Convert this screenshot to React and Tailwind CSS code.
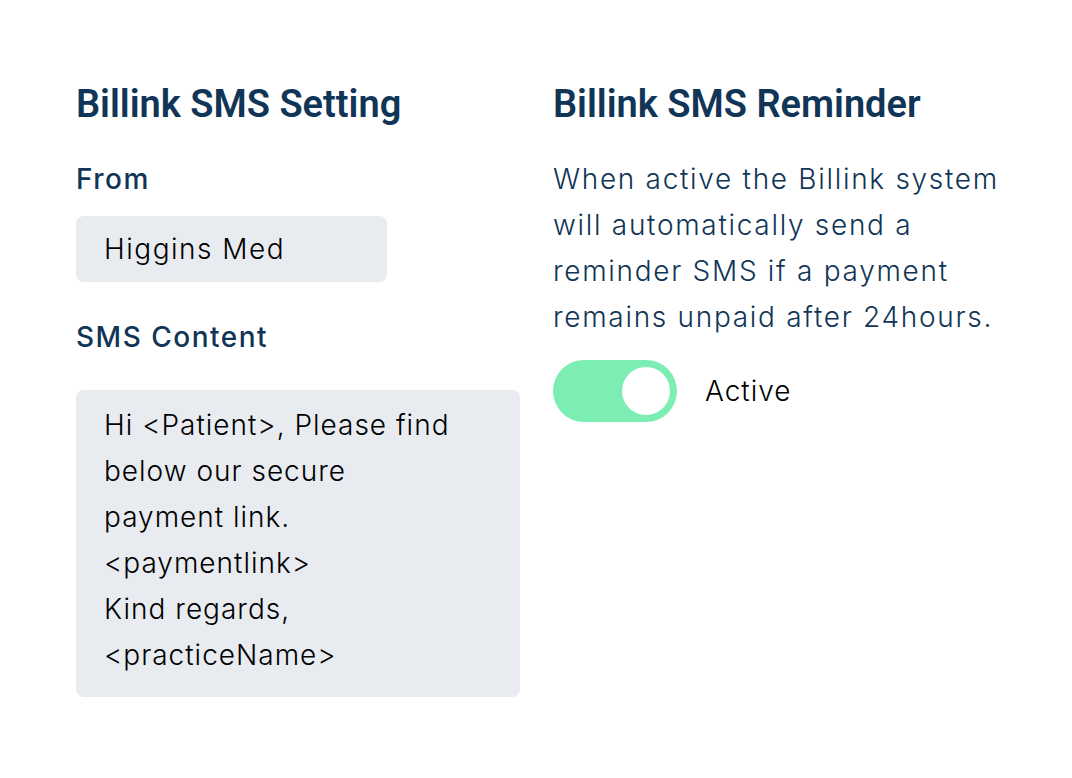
import React from 'react';

const HEADING = { fontFamily: 'Roboto, "Liberation Sans", sans-serif' };
const BODY = { fontFamily: 'Inter, "Noto Sans", sans-serif' };

const SMS_TEXT = `Hi <Patient>, Please find
below our secure
payment link.
<paymentlink>
Kind regards,
<practiceName>`;

const Toggle = ({ on }) => (
  <div className={`w-[124px] h-[62px] rounded-full p-[7px] flex ${on ? 'bg-[#7ceeb4] justify-end' : 'bg-gray-300 justify-start'}`}>
    <div className="w-[48px] h-[48px] rounded-full bg-white" />
  </div>
);

export default function App() {
  return (
    <div className="w-[1072px] h-[778px] bg-white flex gap-[33px] pl-[76px] pt-[80px]" style={BODY}>
      <div className="w-[444px] flex flex-col">
        <h2 className="text-[38px] leading-[48px] font-semibold text-[#103556]" style={HEADING}>
          Billink SMS Setting
        </h2>
        <label className="mt-[33px] text-[28px] leading-[36px] font-medium tracking-[1.5px] text-[#103556]">From</label>
        <div className="mt-[19px] w-[311px] h-[66px] rounded-lg bg-[#e8ebf0] flex items-center px-[28px] text-[28px] font-light tracking-[1.5px] text-black">
          Higgins Med
        </div>
        <label className="mt-[37px] text-[28px] leading-[36px] font-medium tracking-[1.5px] text-[#103556]">SMS Content</label>
        <div className="mt-[35px] h-[307px] rounded-lg bg-[#e8ebf0] px-[28px] pt-[12px] text-[28px] leading-[46px] font-light tracking-[1px] text-black whitespace-pre-line">
          {SMS_TEXT}
        </div>
      </div>
      <div className="flex-1 flex flex-col">
        <h2 className="text-[38px] leading-[48px] font-semibold text-[#103556]" style={HEADING}>
          Billink SMS Reminder
        </h2>
        <p className="mt-[28px] w-[480px] text-[28px] leading-[46px] font-light tracking-[1.7px] text-[#103556]">
          When active the Billink system will automatically send a reminder SMS if a payment remains unpaid after 24hours.
        </p>
        <div className="mt-[20px] flex items-center gap-[28px]">
          <Toggle on />
          <span className="text-[28px] font-light tracking-[1px] text-black">Active</span>
        </div>
      </div>
    </div>
  );
}
